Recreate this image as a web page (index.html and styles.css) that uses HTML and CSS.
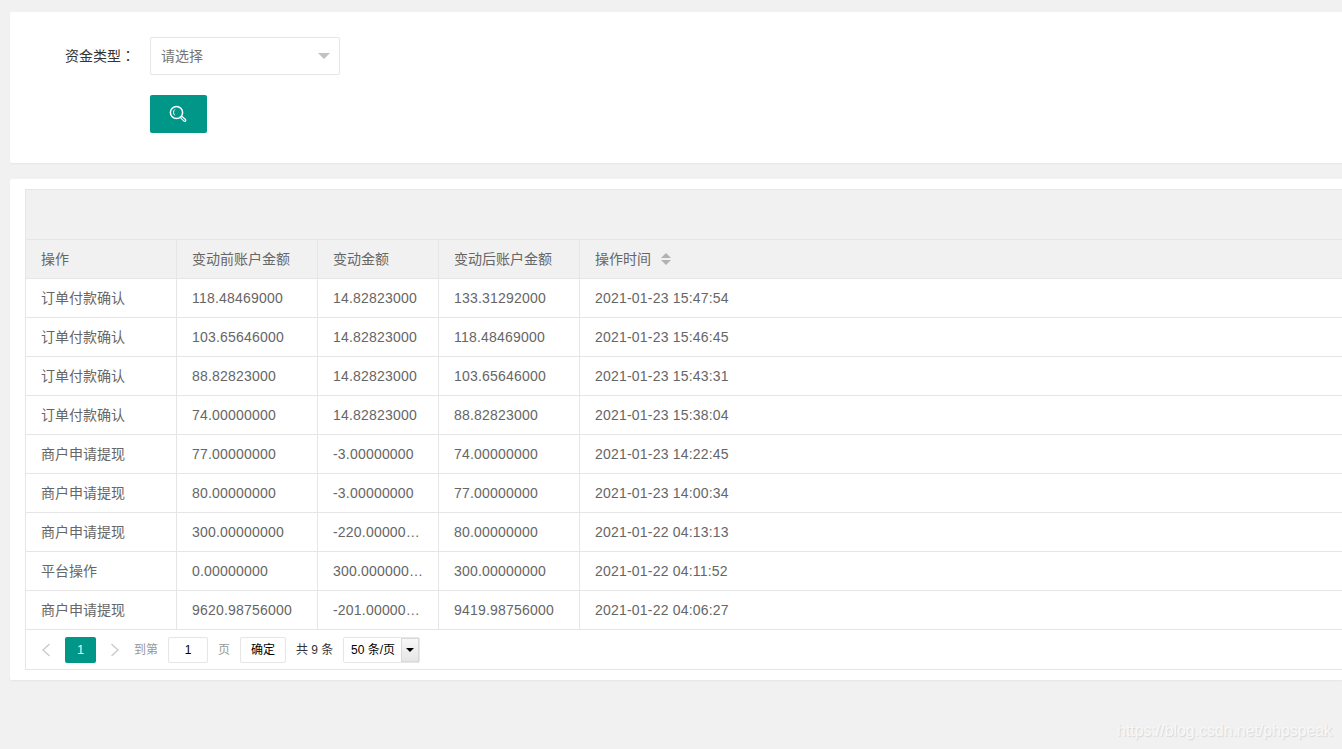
FILE: index.html
```
<!DOCTYPE html>
<html lang="zh-CN">

<head>
    <meta charset="UTF-8">
    <meta name="viewport" content="width=device-width, initial-scale=1.0">
    <title>资金明细</title>
    <link rel="stylesheet" href="styles.css">
</head>

<body>
    <div class="card search-card">
        <div class="form-item">
            <label class="form-label">资金类型<span class="colon" lang="zh-TW">：</span></label>
            <div class="select">
                <span>请选择</span>
                <i class="select-edge"></i>
            </div>
        </div>
        <button class="search-btn" type="button">
            <svg width="18" height="18" viewBox="0 0 18 18" fill="none" stroke="#fff">
                <circle cx="7.5" cy="7.5" r="6.1" stroke-width="1.5" />
                <path d="M5.9 4.4C4.2 5.6 4.1 8.9 5.7 10.3" stroke-width="1" />
                <path d="M11.4 12.6l1.5-1.4 3.6 3.3c.9 1-.5 2.4-1.5 1.6z" stroke-width="1.2" />
            </svg>
        </button>
    </div>

    <div class="card table-card">
        <div class="table-view">
            <div class="table-tool"></div>
            <table class="table">
                <colgroup>
                    <col class="col-type">
                    <col class="col-before">
                    <col class="col-amount">
                    <col class="col-after">
                    <col>
                </colgroup>
                <thead>
                    <tr>
                        <th>操作</th>
                        <th>变动前账户金额</th>
                        <th>变动金额</th>
                        <th>变动后账户金额</th>
                        <th>
                            <div class="sortable">操作时间
                                <span class="sort"><i class="sort-asc"></i><i class="sort-desc"></i></span>
                            </div>
                        </th>
                    </tr>
                </thead>
                <tbody>
                    <tr><td>订单付款确认</td><td class="num">118.48469000</td><td class="num">14.82823000</td><td class="num">133.31292000</td><td class="num">2021-01-23 15:47:54</td></tr>
                    <tr><td>订单付款确认</td><td class="num">103.65646000</td><td class="num">14.82823000</td><td class="num">118.48469000</td><td class="num">2021-01-23 15:46:45</td></tr>
                    <tr><td>订单付款确认</td><td class="num">88.82823000</td><td class="num">14.82823000</td><td class="num">103.65646000</td><td class="num">2021-01-23 15:43:31</td></tr>
                    <tr><td>订单付款确认</td><td class="num">74.00000000</td><td class="num">14.82823000</td><td class="num">88.82823000</td><td class="num">2021-01-23 15:38:04</td></tr>
                    <tr><td>商户申请提现</td><td class="num">77.00000000</td><td class="num">-3.00000000</td><td class="num">74.00000000</td><td class="num">2021-01-23 14:22:45</td></tr>
                    <tr><td>商户申请提现</td><td class="num">80.00000000</td><td class="num">-3.00000000</td><td class="num">77.00000000</td><td class="num">2021-01-23 14:00:34</td></tr>
                    <tr><td>商户申请提现</td><td class="num">300.00000000</td><td class="num">-220.00000…</td><td class="num">80.00000000</td><td class="num">2021-01-22 04:13:13</td></tr>
                    <tr><td>平台操作</td><td class="num">0.00000000</td><td class="num">300.000000…</td><td class="num">300.00000000</td><td class="num">2021-01-22 04:11:52</td></tr>
                    <tr><td>商户申请提现</td><td class="num">9620.98756000</td><td class="num">-201.00000…</td><td class="num">9419.98756000</td><td class="num">2021-01-22 04:06:27</td></tr>
                </tbody>
            </table>

            <div class="page">
                <svg class="page-prev" width="10" height="14" viewBox="0 0 10 14" fill="none" stroke="#c9c9c9" stroke-width="1.3">
                    <path d="M8.5 1L2 7l6.5 6" />
                </svg>
                <span class="page-curr">1</span>
                <svg class="page-next" width="10" height="14" viewBox="0 0 10 14" fill="none" stroke="#c9c9c9" stroke-width="1.3">
                    <path d="M1.5 1L8 7l-6.5 6" />
                </svg>
                <span class="page-text">到第</span>
                <span class="page-input">1</span>
                <span class="page-text">页</span>
                <button class="page-btn" type="button">确定</button>
                <span class="page-count">共 9 条</span>
                <div class="page-limit">
                    <span>50 条/页</span>
                    <span class="limit-arrow"><i></i></span>
                </div>
            </div>
        </div>
    </div>

    <div class="watermark">https://blog.csdn.net/phpspeak</div>
</body>

</html>
```
FILE: styles.css
```
* {
    box-sizing: border-box;
}

body {
    margin: 0;
    padding: 12px 0 0 10px;
    height: 749px;
    overflow: hidden;
    background-color: #f1f1f1;
    color: #333;
    font: 14px/24px "Liberation Sans", "Noto Sans CJK SC", sans-serif;
}

.card {
    background-color: #fff;
    border-radius: 2px 0 0 2px;
    box-shadow: 0 1px 2px 0 rgba(0, 0, 0, .05);
}

/* search form */
.search-card {
    height: 151px;
    padding: 25px 0 0 55px;
    margin-bottom: 16px;
}

.form-item {
    display: flex;
    align-items: center;
    margin-bottom: 20px;
}

.form-label {
    width: 85px;
    white-space: nowrap;
}

.colon {
    font-family: "Noto Sans CJK TC", sans-serif;
    line-height: 1;
}

.select {
    display: flex;
    align-items: center;
    justify-content: space-between;
    width: 190px;
    height: 38px;
    padding: 0 9px 0 10px;
    border: 1px solid #e6e6e6;
    border-radius: 2px;
    color: #757575;
}

.select-edge {
    border: 6px solid transparent;
    border-top-color: #c2c2c2;
    border-bottom: 0;
}

.search-btn {
    display: flex;
    align-items: center;
    width: 57px;
    height: 38px;
    margin-left: 85px;
    padding: 0 0 0 19px;
    border: none;
    border-radius: 2px;
    background-color: #009688;
}

/* table */
.table-card {
    height: 501px;
    padding: 10px 0 0 15px;
}

.table-view {
    height: 481px;
    border: 1px solid #e6e6e6;
    border-right: 0;
}

.table-tool {
    height: 50px;
    background-color: #f1f1f1;
    border-bottom: 1px solid #e6e6e6;
}

.table {
    width: 100%;
    table-layout: fixed;
    border-collapse: separate;
    border-spacing: 0;
    color: #666;
}

.col-type {
    width: 151px;
}

.col-before,
.col-after {
    width: 141px;
}

.col-amount {
    width: 121px;
}

.table th,
.table td {
    height: 39px;
    padding: 0 15px;
    border-right: 1px solid #e6e6e6;
    border-bottom: 1px solid #e6e6e6;
    font-weight: 400;
    text-align: left;
    white-space: nowrap;
}

.table th:last-child,
.table td:last-child {
    border-right: 0;
}

.table th {
    background-color: #f1f1f1;
}

.table .num {
    letter-spacing: .2px;
}

.sortable {
    display: flex;
    align-items: center;
}

.sort {
    display: flex;
    flex-direction: column;
    gap: 2px;
    margin-left: 10px;
}

.sort i {
    border: 5px solid transparent;
}

.sort .sort-asc {
    border-top: 0;
    border-bottom-color: #b2b2b2;
}

.sort .sort-desc {
    border-bottom: 0;
    border-top-color: #b2b2b2;
}

/* pagination */
.page {
    display: flex;
    align-items: center;
    height: 40px;
    padding-left: 15px;
    font-size: 12px;
}

.page-curr {
    width: 31px;
    height: 26px;
    margin: 0 14px;
    border-radius: 2px;
    background-color: #009688;
    color: #fff;
    line-height: 26px;
    text-align: center;
}

.page-text {
    color: #999;
}

.page-next {
    margin-right: 14px;
}

.page-input {
    width: 40px;
    height: 26px;
    margin: 0 10px;
    border: 1px solid #e6e6e6;
    border-radius: 2px;
    color: #000;
    line-height: 24px;
    text-align: center;
}

.page-btn {
    width: 46px;
    height: 26px;
    margin: 0 10px;
    padding: 0;
    border: 1px solid #e6e6e6;
    border-radius: 2px;
    background-color: #fff;
    color: #000;
    font: inherit;
}

.page-count {
    width: 37px;
    white-space: nowrap;
}

.page-limit {
    display: flex;
    align-items: center;
    justify-content: space-between;
    width: 77px;
    height: 26px;
    margin-left: 10px;
    padding-left: 7px;
    border: 1px solid #e6e6e6;
    border-radius: 2px;
    color: #000;
    white-space: nowrap;
}

.limit-arrow {
    display: flex;
    align-items: center;
    justify-content: center;
    width: 18px;
    height: 24px;
    border: 1px solid #d9d9d9;
    background: linear-gradient(#f8f8f8, #e6e6e6);
}

.limit-arrow i {
    border: 4px solid transparent;
    border-top-color: #000;
    border-bottom: 0;
}

.watermark {
    position: absolute;
    right: 10px;
    bottom: 6px;
    color: #f8f8f8;
    font-size: 15.85px;
    text-shadow: 1px 1px 1px #d6d6d6;
}
```
